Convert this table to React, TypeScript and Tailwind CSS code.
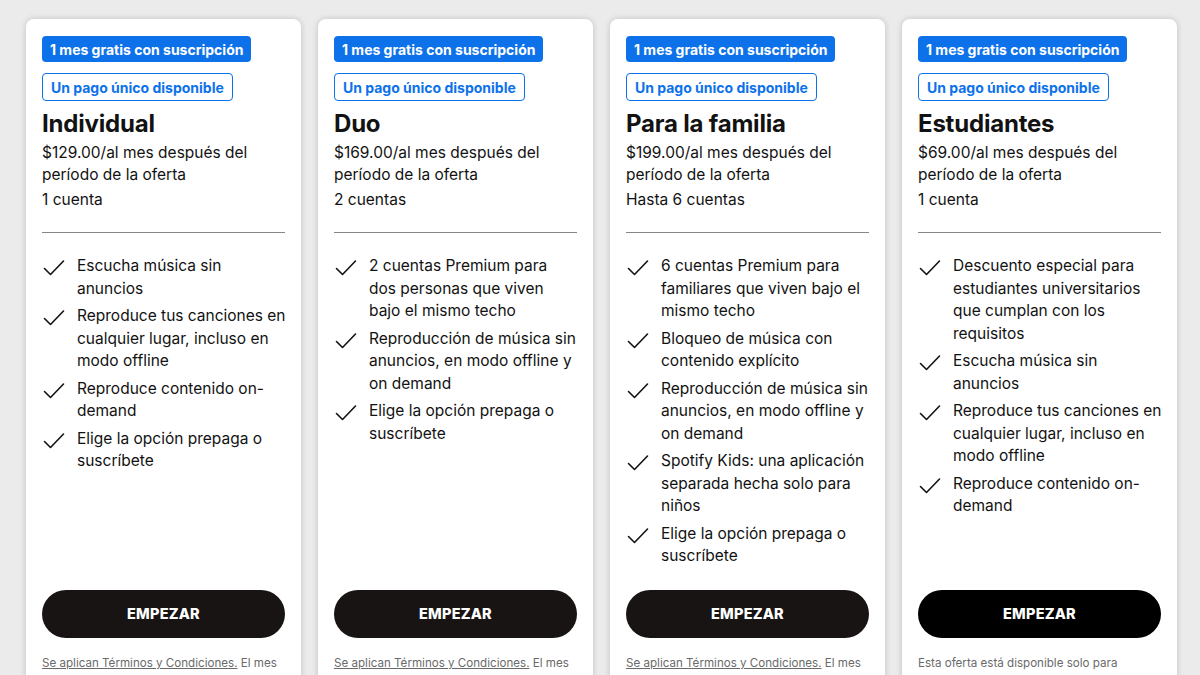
import React from "react";

type Plan = {
  name: string;
  price: string[];
  accounts: string;
  features: string[][];
  black?: boolean;
  footer: React.ReactNode;
};

const tc = (
  <>
    <span className="underline">Se aplican Términos y Condiciones.</span> El mes gratis no está disponible para usuarios que ya probaron Premium.
  </>
);

const plans: Plan[] = [
  {
    name: "Individual",
    price: ["$129.00/al mes después del", "período de la oferta"],
    accounts: "1 cuenta",
    features: [
      ["Escucha música sin", "anuncios"],
      ["Reproduce tus canciones en", "cualquier lugar, incluso en", "modo offline"],
      ["Reproduce contenido on-", "demand"],
      ["Elige la opción prepaga o", "suscríbete"],
    ],
    footer: tc,
  },
  {
    name: "Duo",
    price: ["$169.00/al mes después del", "período de la oferta"],
    accounts: "2 cuentas",
    features: [
      ["2 cuentas Premium para", "dos personas que viven", "bajo el mismo techo"],
      ["Reproducción de música sin", "anuncios, en modo offline y", "on demand"],
      ["Elige la opción prepaga o", "suscríbete"],
    ],
    footer: tc,
  },
  {
    name: "Para la familia",
    price: ["$199.00/al mes después del", "período de la oferta"],
    accounts: "Hasta 6 cuentas",
    features: [
      ["6 cuentas Premium para", "familiares que viven bajo el", "mismo techo"],
      ["Bloqueo de música con", "contenido explícito"],
      ["Reproducción de música sin", "anuncios, en modo offline y", "on demand"],
      ["Spotify Kids: una aplicación", "separada hecha solo para", "niños"],
      ["Elige la opción prepaga o", "suscríbete"],
    ],
    footer: tc,
  },
  {
    name: "Estudiantes",
    price: ["$69.00/al mes después del", "período de la oferta"],
    accounts: "1 cuenta",
    features: [
      ["Descuento especial para", "estudiantes universitarios", "que cumplan con los", "requisitos"],
      ["Escucha música sin", "anuncios"],
      ["Reproduce tus canciones en", "cualquier lugar, incluso en", "modo offline"],
      ["Reproduce contenido on-", "demand"],
    ],
    black: true,
    footer: <>Esta oferta está disponible solo para estudiantes de instituciones universitarias acreditadas.</>,
  },
];

function Check() {
  return (
    <svg width="24" height="24" viewBox="0 0 24 24" fill="none" className="shrink-0 mt-[1px]">
      <path d="M2.5 12.5 L8.5 18.5 L21.5 5" stroke="#121212" strokeWidth="1.6" strokeLinecap="round" strokeLinejoin="round" />
    </svg>
  );
}

function Lines({ lines }: { lines: string[] }) {
  return (
    <span className="flex flex-col whitespace-nowrap">
      {lines.map((l, i) => (
        <span key={i}>{l}</span>
      ))}
    </span>
  );
}

function Card({ p }: { p: Plan }) {
  return (
    <div className="w-[275px] h-[737px] shrink-0 bg-white rounded-lg shadow-[0_0_6px_rgba(0,0,0,0.18)] px-4 pt-[17px] flex flex-col text-[#121212]">
      <div className="flex flex-col items-start gap-[11px]">
        <span className="bg-[#0d72ea] text-white text-[14px] font-bold rounded-[4px] px-[8px] h-[26px] flex items-center">
          1 mes gratis con suscripción
        </span>
        <span className="border-[1.5px] border-[#0d72ea] text-[#0d72ea] text-[14px] font-bold rounded-[4px] px-[8px] h-[28px] flex items-center">
          Un pago único disponible
        </span>
      </div>
      <h2 className="text-[24px] font-bold leading-[30px] mt-[8px] tracking-[-0.2px]">{p.name}</h2>
      <div className="text-[15.5px] leading-[22px] mt-[3px]">
        <Lines lines={p.price} />
      </div>
      <p className="text-[15.5px] leading-[22px] mt-[3px]">{p.accounts}</p>
      <div className="h-px bg-[#878787] mt-[21px]" />
      <ul className="mt-[22px] flex flex-col gap-[5px] flex-1">
        {p.features.map((f, i) => (
          <li key={i} className="flex gap-[11px] text-[15.5px] leading-[22.5px]">
            <Check />
            <Lines lines={f} />
          </li>
        ))}
      </ul>
      <button
        className={`h-[48px] w-full shrink-0 rounded-full text-white text-[14.5px] font-extrabold tracking-[0.2px] ${p.black ? "bg-black" : "bg-[#191414]"}`}
      >
        EMPEZAR
      </button>
      <p className="text-[11.6px] leading-[18px] text-[#6a6a6a] mt-[16px] h-[102px] shrink-0">{p.footer}</p>
    </div>
  );
}

export default function App() {
  return (
    <div
      className="w-[1200px] h-[675px] overflow-hidden bg-[#ebebeb] flex gap-[17px] pl-[26px] pt-[19px]"
      style={{ fontFamily: "Inter, 'Noto Sans', sans-serif" }}
    >
      {plans.map((p) => (
        <Card key={p.name} p={p} />
      ))}
    </div>
  );
}
